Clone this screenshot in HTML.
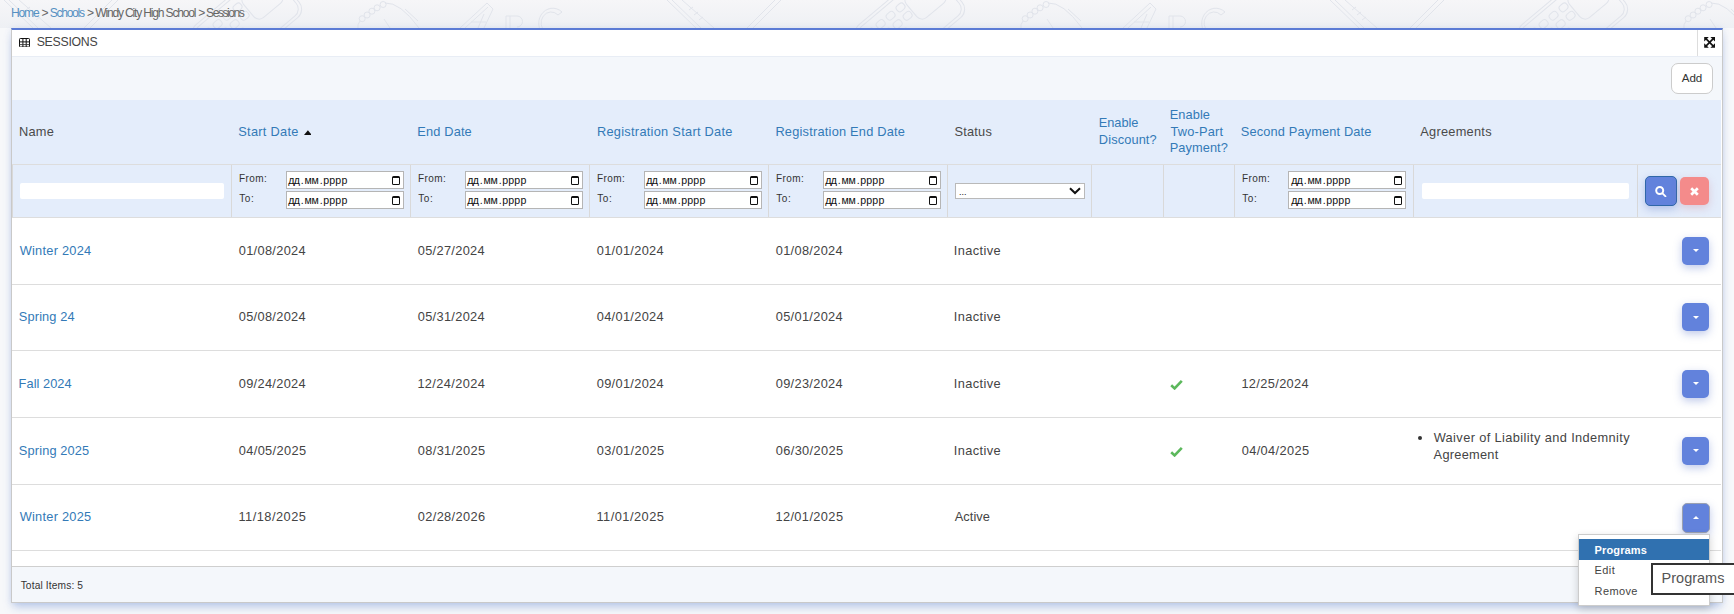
<!DOCTYPE html>
<html lang="en">
<head>
<meta charset="utf-8">
<title>Sessions</title>
<style>
*{box-sizing:border-box;margin:0;padding:0}
html,body{width:1734px;height:614px;overflow:hidden}
body{font-family:"Liberation Sans",sans-serif;font-size:13.2px;color:#444;background:#f7f8fa;position:relative}
.abs{position:absolute}
a{color:#337ab7;text-decoration:none}
#bgtop{left:0;top:0;width:1734px;height:28px;background:linear-gradient(#f6f6f8,#eef0f4)}
.cr{font-size:12.1px;line-height:16px;color:#666;white-space:nowrap}
.cr.a{color:#5690c2}
#panel{left:11px;top:28px;width:1712px;height:575px;background:#fff;border:1px solid #c9c9c9;border-top:2px solid #5b7bd5;box-shadow:0 6px 9px -2px rgba(105,140,210,.42),0 0 6px rgba(120,150,215,.16)}
#hdr{left:12px;top:30px;width:1710px;height:27px;background:#fff;border-bottom:1px solid #e8edf5}
.ttl{font-size:12.3px;line-height:16px;color:#444;white-space:nowrap}
#expsep{left:1697px;top:30px;width:1px;height:26px;background:#ddd}
#toolbar{left:12px;top:57px;width:1710px;height:43px;background:#f4f7fb}
#add{left:1671px;top:63px;width:42px;height:30.5px;border:1px solid #ccc;border-radius:7px;background:#fff;font-size:11.6px;line-height:28px;text-align:center;color:#333}
#thead{left:12px;top:100px;width:1709px;height:117px;background:#e4edfb}
.hline{left:12px;width:1709px;height:1px;background:#ddd}
.vline{top:165px;width:1px;height:52px;background:#d9d9d9}
.th{font-size:12.8px;line-height:16px;white-space:nowrap;color:#4a4a4a}
.th.l{color:#337ab7}
.td{font-size:12.8px;line-height:16px;white-space:nowrap;color:#444}
.td.l{color:#337ab7}
.lbl{font-size:10px;line-height:13px;color:#333;white-space:nowrap}
.dt{font-size:10.6px;line-height:13px;color:#111;white-space:nowrap}
.date{width:118px;height:18px;background:#fff;border:1px solid #b5b5b5;font-family:"Liberation Mono",monospace;font-size:10.5px;line-height:16px;color:#000;padding-left:2px;white-space:nowrap}
.date i{position:absolute;right:3px;top:3.5px;width:8px;height:9px;border:1px solid #111;border-top:2.5px solid #111;border-radius:1.5px;display:block}
.txt{height:16px;background:#fff;border-radius:2px}
.btn{border-radius:5px;background:#6282dc;box-shadow:0 3px 9px rgba(90,115,200,.38)}
#foot{left:12px;top:566px;width:1710px;height:36px;background:#f4f7fb;border-top:1px solid #cfcfcf}
.tot{font-size:10.2px;line-height:13px;color:#333;white-space:nowrap}
#menu{left:1577.6px;top:534px;width:132.4px;height:72px;background:#fff;border:1px solid #ccc;box-shadow:0 3px 8px rgba(0,0,0,.18)}
#menu .it{position:absolute;left:0;width:130px;height:20.5px;font-size:11px;letter-spacing:.38px;line-height:20.5px;padding-left:16px;color:#444;white-space:nowrap}
#tip{left:1651px;top:563px;width:90px;height:32px;background:#fff;border:2px solid #333;font-size:14.5px;line-height:27.4px;padding-left:8.6px;color:#555;white-space:nowrap}
</style>
</head>
<body>
<div class="abs" id="bgtop"></div>
<svg class="abs" style="left:0;top:0" width="1734" height="28" viewBox="0 0 1734 28"><g transform="translate(0,0)" fill="none" stroke="#e1e4eb" stroke-width="1">
<path d="M4 0L33 28M9 0L38 28M19 0L51 28M84 28L112 0M90 28L118 0M26 10l4 -3M31 15l4 -3M36 20l4 -3"/>
<g transform="translate(247,21) rotate(-40)"><rect x="-52" y="-30" width="104" height="60" rx="11"/><rect x="-49" y="-27" width="98" height="54" rx="9"/><rect x="8" y="-22" width="36" height="30" rx="7"/><path d="M14 -16H38"/>
<rect x="-42" y="-20" width="9" height="7" rx="3"/><rect x="-29" y="-20" width="9" height="7" rx="3"/><rect x="-16" y="-20" width="9" height="7" rx="3"/><rect x="-3" y="-20" width="9" height="7" rx="3"/>
<rect x="-42" y="-9" width="9" height="7" rx="3"/><rect x="-29" y="-9" width="9" height="7" rx="3"/><rect x="-16" y="-9" width="9" height="7" rx="3"/><rect x="-3" y="-9" width="9" height="7" rx="3"/>
<rect x="-42" y="2" width="9" height="7" rx="3"/><rect x="-29" y="2" width="9" height="7" rx="3"/><rect x="-16" y="2" width="9" height="7" rx="3"/></g>
<circle cx="362.2" cy="18.7" r="3"/><circle cx="367.1" cy="15" r="3"/><circle cx="371.9" cy="11.2" r="3"/><circle cx="377.1" cy="7.8" r="3"/><circle cx="383.1" cy="4.5" r="3"/>
<path d="M360 21Q357 25 358 28M385 3Q400 2 419 28M405 9L418 21M384 19L390 28"/>
<path d="M460 28L487 3L493 9L484 28M465 28L488 7M471 22H486M478 28L484 14"/>
<path d="M506 28V16H517a5.5 5.5 0 0 1 0 11M510 28V16"/>
<path d="M562 12A14 15 0 1 0 566 28M558 15A10 11 0 1 0 560 28M562 12l-4 3"/>
</g><g transform="translate(663,0)" fill="none" stroke="#e1e4eb" stroke-width="1">
<path d="M4 0L33 28M9 0L38 28M19 0L51 28M84 28L112 0M90 28L118 0M26 10l4 -3M31 15l4 -3M36 20l4 -3"/>
<g transform="translate(247,21) rotate(-40)"><rect x="-52" y="-30" width="104" height="60" rx="11"/><rect x="-49" y="-27" width="98" height="54" rx="9"/><rect x="8" y="-22" width="36" height="30" rx="7"/><path d="M14 -16H38"/>
<rect x="-42" y="-20" width="9" height="7" rx="3"/><rect x="-29" y="-20" width="9" height="7" rx="3"/><rect x="-16" y="-20" width="9" height="7" rx="3"/><rect x="-3" y="-20" width="9" height="7" rx="3"/>
<rect x="-42" y="-9" width="9" height="7" rx="3"/><rect x="-29" y="-9" width="9" height="7" rx="3"/><rect x="-16" y="-9" width="9" height="7" rx="3"/><rect x="-3" y="-9" width="9" height="7" rx="3"/>
<rect x="-42" y="2" width="9" height="7" rx="3"/><rect x="-29" y="2" width="9" height="7" rx="3"/><rect x="-16" y="2" width="9" height="7" rx="3"/></g>
<circle cx="362.2" cy="18.7" r="3"/><circle cx="367.1" cy="15" r="3"/><circle cx="371.9" cy="11.2" r="3"/><circle cx="377.1" cy="7.8" r="3"/><circle cx="383.1" cy="4.5" r="3"/>
<path d="M360 21Q357 25 358 28M385 3Q400 2 419 28M405 9L418 21M384 19L390 28"/>
<path d="M460 28L487 3L493 9L484 28M465 28L488 7M471 22H486M478 28L484 14"/>
<path d="M506 28V16H517a5.5 5.5 0 0 1 0 11M510 28V16"/>
<path d="M562 12A14 15 0 1 0 566 28M558 15A10 11 0 1 0 560 28M562 12l-4 3"/>
</g><g transform="translate(1326,0)" fill="none" stroke="#e1e4eb" stroke-width="1">
<path d="M4 0L33 28M9 0L38 28M19 0L51 28M84 28L112 0M90 28L118 0M26 10l4 -3M31 15l4 -3M36 20l4 -3"/>
<g transform="translate(247,21) rotate(-40)"><rect x="-52" y="-30" width="104" height="60" rx="11"/><rect x="-49" y="-27" width="98" height="54" rx="9"/><rect x="8" y="-22" width="36" height="30" rx="7"/><path d="M14 -16H38"/>
<rect x="-42" y="-20" width="9" height="7" rx="3"/><rect x="-29" y="-20" width="9" height="7" rx="3"/><rect x="-16" y="-20" width="9" height="7" rx="3"/><rect x="-3" y="-20" width="9" height="7" rx="3"/>
<rect x="-42" y="-9" width="9" height="7" rx="3"/><rect x="-29" y="-9" width="9" height="7" rx="3"/><rect x="-16" y="-9" width="9" height="7" rx="3"/><rect x="-3" y="-9" width="9" height="7" rx="3"/>
<rect x="-42" y="2" width="9" height="7" rx="3"/><rect x="-29" y="2" width="9" height="7" rx="3"/><rect x="-16" y="2" width="9" height="7" rx="3"/></g>
<circle cx="362.2" cy="18.7" r="3"/><circle cx="367.1" cy="15" r="3"/><circle cx="371.9" cy="11.2" r="3"/><circle cx="377.1" cy="7.8" r="3"/><circle cx="383.1" cy="4.5" r="3"/>
<path d="M360 21Q357 25 358 28M385 3Q400 2 419 28M405 9L418 21M384 19L390 28"/>
<path d="M460 28L487 3L493 9L484 28M465 28L488 7M471 22H486M478 28L484 14"/>
<path d="M506 28V16H517a5.5 5.5 0 0 1 0 11M510 28V16"/>
<path d="M562 12A14 15 0 1 0 566 28M558 15A10 11 0 1 0 560 28M562 12l-4 3"/>
</g></svg>

<div class="abs" id="panel"></div>
<div class="abs" id="hdr"></div>
<svg class="abs" style="left:19px;top:37.5px" width="11" height="9.5" viewBox="0 0 11 9.5"><rect x="0.5" y="0.5" width="10" height="8.5" rx="0.8" fill="#fff" stroke="#111" stroke-width="1"/><path d="M0.5 3.9H10.5M3.9 0.5V9M7.2 0.5V9" stroke="#111" stroke-width="1" fill="none"/><path d="M0.5 6.6H10.5" stroke="#333" stroke-width="0.9" fill="none"/></svg>
<div class="abs" id="expsep"></div>
<svg class="abs" style="left:1704px;top:37.2px" width="11.2" height="10.8" viewBox="0 0 11 11"><path d="M2 2L9 9M9 2L2 9" stroke="#111" stroke-width="1.7" fill="none"/><path d="M0 0H4.7L0 4.7ZM11 0V4.7L6.3 0ZM0 11V6.3L4.7 11ZM11 11H6.3L11 6.3Z" fill="#111"/></svg>

<div class="abs" id="toolbar"></div>
<div class="abs" id="add">Add</div>

<div class="abs" id="thead"></div>
<svg class="abs" style="left:303.6px;top:130px" width="7.8" height="5.2" viewBox="0 0 8 5"><path d="M0 5L4 0L8 5Z" fill="#111"/></svg>

<!-- filter row -->
<div class="abs hline" style="top:164px"></div>
<div class="abs vline" style="left:12px"></div>
<div class="abs vline" style="left:231px"></div>
<div class="abs vline" style="left:410px"></div>
<div class="abs vline" style="left:589px"></div>
<div class="abs vline" style="left:768px"></div>
<div class="abs vline" style="left:947px"></div>
<div class="abs vline" style="left:1091px"></div>
<div class="abs vline" style="left:1163px"></div>
<div class="abs vline" style="left:1234px"></div>
<div class="abs vline" style="left:1413px"></div>
<div class="abs vline" style="left:1637px"></div>

<div class="abs txt" style="left:20px;top:183px;width:204px"></div>
<div class="abs txt" style="left:1422px;top:183px;width:207px"></div>

<div class="abs date" style="left:286px;top:171px"><i></i></div>
<div class="abs date" style="left:286px;top:191px"><i></i></div>
<div class="abs date" style="left:465px;top:171px"><i></i></div>
<div class="abs date" style="left:465px;top:191px"><i></i></div>
<div class="abs date" style="left:644px;top:171px"><i></i></div>
<div class="abs date" style="left:644px;top:191px"><i></i></div>
<div class="abs date" style="left:823px;top:171px"><i></i></div>
<div class="abs date" style="left:823px;top:191px"><i></i></div>
<div class="abs date" style="left:1288px;top:171px"><i></i></div>
<div class="abs date" style="left:1288px;top:191px"><i></i></div>

<div class="abs" style="left:955px;top:183px;width:130px;height:16px;background:#fff;border:1px solid #b9b9b9"></div>
<div class="abs" style="left:959px;top:186px;font-size:9px;line-height:12px;color:#111">...</div>
<svg class="abs" style="left:1069px;top:187px" width="12" height="8" viewBox="0 0 12 8"><path d="M1 1.2L6 6L11 1.2" stroke="#111" stroke-width="2" fill="none"/></svg>

<div class="abs btn" style="left:1645px;top:176px;width:32px;height:30px;border:1px solid #2f67a8"></div>
<svg class="abs" style="left:1655px;top:185px" width="12" height="12" viewBox="0 0 12 12"><circle cx="4.7" cy="5.5" r="3.5" stroke="#fff" stroke-width="2" fill="none"/><path d="M7.5 8.3L10.5 11.3" stroke="#fff" stroke-width="1.8" stroke-linecap="round"/></svg>
<div class="abs btn" style="left:1680px;top:177px;width:29px;height:28px;background:#f48b8b;box-shadow:0 3px 8px rgba(200,120,140,.3)"></div>
<svg class="abs" style="left:1690px;top:187px" width="9" height="9" viewBox="0 0 9 9"><path d="M1.2 1.2L7.8 7.8M7.8 1.2L1.2 7.8" stroke="#fff" stroke-width="2.7"/></svg>

<div class="abs hline" style="top:217px"></div>
<div class="abs hline" style="top:284px"></div>
<div class="abs hline" style="top:350px"></div>
<div class="abs hline" style="top:417px"></div>
<div class="abs hline" style="top:484px"></div>
<div class="abs hline" style="top:550px"></div>
<div class="abs btn" style="left:1682px;top:236.5px;width:27px;height:28px"></div>
<svg class="abs" style="left:1692.5px;top:249.0px" width="6" height="3" viewBox="0 0 6 3"><path d="M0 0H6L3 3Z" fill="#fff"/></svg>
<div class="abs btn" style="left:1682px;top:303.0px;width:27px;height:28px"></div>
<svg class="abs" style="left:1692.5px;top:315.5px" width="6" height="3" viewBox="0 0 6 3"><path d="M0 0H6L3 3Z" fill="#fff"/></svg>
<svg class="abs" style="left:1170px;top:378.5px" width="13" height="11" viewBox="0 0 13 11"><path d="M1.2 6.2L4.6 9.4L11.8 1.8" stroke="#5cb85c" stroke-width="2.6" fill="none"/></svg>
<div class="abs btn" style="left:1682px;top:369.5px;width:27px;height:28px"></div>
<svg class="abs" style="left:1692.5px;top:382.0px" width="6" height="3" viewBox="0 0 6 3"><path d="M0 0H6L3 3Z" fill="#fff"/></svg>
<svg class="abs" style="left:1170px;top:445.5px" width="13" height="11" viewBox="0 0 13 11"><path d="M1.2 6.2L4.6 9.4L11.8 1.8" stroke="#5cb85c" stroke-width="2.6" fill="none"/></svg>
<div class="abs" style="left:1417.7px;top:435.8px;width:4.6px;height:4.6px;border-radius:50%;background:#333"></div>
<div class="abs btn" style="left:1682px;top:436.5px;width:27px;height:28px"></div>
<svg class="abs" style="left:1692.5px;top:449.0px" width="6" height="3" viewBox="0 0 6 3"><path d="M0 0H6L3 3Z" fill="#fff"/></svg>
<div class="abs btn" style="left:1681.5px;top:502.5px;width:28px;height:30px;border:1px solid #9aa0b0"></div>
<svg class="abs" style="left:1692.5px;top:515.5px" width="6" height="3" viewBox="0 0 6 3"><path d="M0 3H6L3 0Z" fill="#fff"/></svg>

<div class="abs" id="foot"></div>
<div class="abs cr a" style="left:11.09px;top:4.61px;letter-spacing:-1.242px;">Home</div>
<div class="abs cr" style="left:41.49px;top:4.61px;">&gt;</div>
<div class="abs cr a" style="left:49.69px;top:4.61px;letter-spacing:-1.296px;">Schools</div>
<div class="abs cr" style="left:86.98px;top:4.61px;">&gt;</div>
<div class="abs cr" style="left:95.23px;top:4.61px;letter-spacing:-1.192px;">Windy City High School</div>
<div class="abs cr" style="left:198.25px;top:4.61px;">&gt;</div>
<div class="abs cr" style="left:206.12px;top:4.61px;letter-spacing:-1.47px;">Sessions</div>
<div class="abs ttl" style="left:36.7px;top:33.54px;letter-spacing:-0.278px;">SESSIONS</div>
<div class="abs th" style="left:19.03px;top:123.56px;letter-spacing:0.221px;">Name</div>
<div class="abs th l" style="left:238.26px;top:123.56px;letter-spacing:0.284px;">Start Date</div>
<div class="abs th l" style="left:417.37px;top:123.56px;letter-spacing:0.145px;">End Date</div>
<div class="abs th l" style="left:596.92px;top:123.56px;letter-spacing:0.277px;">Registration Start Date</div>
<div class="abs th l" style="left:775.41px;top:123.56px;letter-spacing:0.217px;">Registration End Date</div>
<div class="abs th" style="left:954.47px;top:123.56px;letter-spacing:0.222px;">Status</div>
<div class="abs th l" style="left:1098.86px;top:114.56px;letter-spacing:-0.072px;">Enable</div>
<div class="abs th l" style="left:1098.86px;top:131.76px;letter-spacing:0.111px;">Discount?</div>
<div class="abs th l" style="left:1169.63px;top:106.56px;letter-spacing:0.098px;">Enable</div>
<div class="abs th l" style="left:1170.44px;top:123.76px;letter-spacing:0.19px;">Two-Part</div>
<div class="abs th l" style="left:1169.63px;top:139.56px;letter-spacing:0.085px;">Payment?</div>
<div class="abs th l" style="left:1240.79px;top:123.56px;letter-spacing:0.142px;">Second Payment Date</div>
<div class="abs th" style="left:1420.29px;top:123.56px;letter-spacing:0.253px;">Agreements</div>
<div class="abs td l" style="left:19.66px;top:242.56px;letter-spacing:0.259px;">Winter 2024</div>
<div class="abs td" style="left:238.75px;top:242.56px;letter-spacing:0.318px;">01/08/2024</div>
<div class="abs td" style="left:417.75px;top:242.56px;letter-spacing:0.318px;">05/27/2024</div>
<div class="abs td" style="left:596.75px;top:242.56px;letter-spacing:0.318px;">01/01/2024</div>
<div class="abs td" style="left:775.75px;top:242.56px;letter-spacing:0.318px;">01/08/2024</div>
<div class="abs td" style="left:953.87px;top:242.56px;letter-spacing:0.378px;">Inactive</div>
<div class="abs td l" style="left:18.87px;top:308.56px;letter-spacing:0.124px;">Spring 24</div>
<div class="abs td" style="left:238.75px;top:308.56px;letter-spacing:0.318px;">05/08/2024</div>
<div class="abs td" style="left:417.75px;top:308.56px;letter-spacing:0.318px;">05/31/2024</div>
<div class="abs td" style="left:596.75px;top:308.56px;letter-spacing:0.318px;">04/01/2024</div>
<div class="abs td" style="left:775.75px;top:308.56px;letter-spacing:0.318px;">05/01/2024</div>
<div class="abs td" style="left:953.87px;top:308.56px;letter-spacing:0.378px;">Inactive</div>
<div class="abs td l" style="left:18.6px;top:375.56px;letter-spacing:0.051px;">Fall 2024</div>
<div class="abs td" style="left:238.75px;top:375.56px;letter-spacing:0.318px;">09/24/2024</div>
<div class="abs td" style="left:417.38px;top:375.56px;letter-spacing:0.371px;">12/24/2024</div>
<div class="abs td" style="left:596.75px;top:375.56px;letter-spacing:0.318px;">09/01/2024</div>
<div class="abs td" style="left:775.75px;top:375.56px;letter-spacing:0.318px;">09/23/2024</div>
<div class="abs td" style="left:953.87px;top:375.56px;letter-spacing:0.378px;">Inactive</div>
<div class="abs td" style="left:1241.38px;top:375.56px;letter-spacing:0.364px;">12/25/2024</div>
<div class="abs td l" style="left:18.87px;top:442.56px;letter-spacing:0.131px;">Spring 2025</div>
<div class="abs td" style="left:238.75px;top:442.56px;letter-spacing:0.363px;">04/05/2025</div>
<div class="abs td" style="left:417.75px;top:442.56px;letter-spacing:0.363px;">08/31/2025</div>
<div class="abs td" style="left:596.75px;top:442.56px;letter-spacing:0.363px;">03/01/2025</div>
<div class="abs td" style="left:775.75px;top:442.56px;letter-spacing:0.363px;">06/30/2025</div>
<div class="abs td" style="left:953.87px;top:442.56px;letter-spacing:0.378px;">Inactive</div>
<div class="abs td" style="left:1241.75px;top:442.56px;letter-spacing:0.357px;">04/04/2025</div>
<div class="abs td l" style="left:19.66px;top:508.56px;letter-spacing:0.259px;">Winter 2025</div>
<div class="abs td" style="left:238.38px;top:508.56px;letter-spacing:0.493px;">11/18/2025</div>
<div class="abs td" style="left:417.75px;top:508.56px;letter-spacing:0.366px;">02/28/2026</div>
<div class="abs td" style="left:596.38px;top:508.56px;letter-spacing:0.493px;">11/01/2025</div>
<div class="abs td" style="left:775.38px;top:508.56px;letter-spacing:0.398px;">12/01/2025</div>
<div class="abs td" style="left:954.77px;top:508.56px;letter-spacing:0.056px;">Active</div>
<div class="abs td" style="left:1433.64px;top:429.56px;letter-spacing:0.385px;">Waiver of Liability and Indemnity</div>
<div class="abs td" style="left:1433.6px;top:446.76px;letter-spacing:0.259px;">Agreement</div>
<div class="abs tot" style="left:20.64px;top:578.97px;letter-spacing:0.139px;">Total Items: 5</div>
<div class="abs lbl" style="left:238.88px;top:172.03px;letter-spacing:0.45px;">From:</div>
<div class="abs dt" style="left:288.21px;top:173.83px;letter-spacing:-0.749px;">дд</div>
<div class="abs dt" style="left:300.8px;top:173.83px;">.</div>
<div class="abs dt" style="left:304.55px;top:173.83px;letter-spacing:-0.231px;">мм</div>
<div class="abs dt" style="left:319.8px;top:173.83px;">.</div>
<div class="abs dt" style="left:323.18px;top:173.83px;letter-spacing:0.193px;">рррр</div>
<div class="abs lbl" style="left:239.19px;top:191.84px;letter-spacing:0.595px;">To:</div>
<div class="abs dt" style="left:288.21px;top:193.73px;letter-spacing:-0.749px;">дд</div>
<div class="abs dt" style="left:300.8px;top:193.73px;">.</div>
<div class="abs dt" style="left:304.55px;top:193.73px;letter-spacing:-0.231px;">мм</div>
<div class="abs dt" style="left:319.8px;top:193.73px;">.</div>
<div class="abs dt" style="left:323.18px;top:193.73px;letter-spacing:0.193px;">рррр</div>
<div class="abs lbl" style="left:417.88px;top:172.03px;letter-spacing:0.45px;">From:</div>
<div class="abs dt" style="left:467.21px;top:173.83px;letter-spacing:-0.749px;">дд</div>
<div class="abs dt" style="left:479.8px;top:173.83px;">.</div>
<div class="abs dt" style="left:483.55px;top:173.83px;letter-spacing:-0.231px;">мм</div>
<div class="abs dt" style="left:498.8px;top:173.83px;">.</div>
<div class="abs dt" style="left:502.18px;top:173.83px;letter-spacing:0.193px;">рррр</div>
<div class="abs lbl" style="left:418.19px;top:191.84px;letter-spacing:0.595px;">To:</div>
<div class="abs dt" style="left:467.21px;top:193.73px;letter-spacing:-0.749px;">дд</div>
<div class="abs dt" style="left:479.8px;top:193.73px;">.</div>
<div class="abs dt" style="left:483.55px;top:193.73px;letter-spacing:-0.231px;">мм</div>
<div class="abs dt" style="left:498.8px;top:193.73px;">.</div>
<div class="abs dt" style="left:502.18px;top:193.73px;letter-spacing:0.193px;">рррр</div>
<div class="abs lbl" style="left:596.88px;top:172.03px;letter-spacing:0.45px;">From:</div>
<div class="abs dt" style="left:646.21px;top:173.83px;letter-spacing:-0.749px;">дд</div>
<div class="abs dt" style="left:658.8px;top:173.83px;">.</div>
<div class="abs dt" style="left:662.55px;top:173.83px;letter-spacing:-0.231px;">мм</div>
<div class="abs dt" style="left:677.8px;top:173.83px;">.</div>
<div class="abs dt" style="left:681.18px;top:173.83px;letter-spacing:0.193px;">рррр</div>
<div class="abs lbl" style="left:597.19px;top:191.84px;letter-spacing:0.595px;">To:</div>
<div class="abs dt" style="left:646.21px;top:193.73px;letter-spacing:-0.749px;">дд</div>
<div class="abs dt" style="left:658.8px;top:193.73px;">.</div>
<div class="abs dt" style="left:662.55px;top:193.73px;letter-spacing:-0.231px;">мм</div>
<div class="abs dt" style="left:677.8px;top:193.73px;">.</div>
<div class="abs dt" style="left:681.18px;top:193.73px;letter-spacing:0.193px;">рррр</div>
<div class="abs lbl" style="left:775.88px;top:172.03px;letter-spacing:0.45px;">From:</div>
<div class="abs dt" style="left:825.21px;top:173.83px;letter-spacing:-0.749px;">дд</div>
<div class="abs dt" style="left:837.8px;top:173.83px;">.</div>
<div class="abs dt" style="left:841.55px;top:173.83px;letter-spacing:-0.231px;">мм</div>
<div class="abs dt" style="left:856.8px;top:173.83px;">.</div>
<div class="abs dt" style="left:860.18px;top:173.83px;letter-spacing:0.193px;">рррр</div>
<div class="abs lbl" style="left:776.19px;top:191.84px;letter-spacing:0.595px;">To:</div>
<div class="abs dt" style="left:825.21px;top:193.73px;letter-spacing:-0.749px;">дд</div>
<div class="abs dt" style="left:837.8px;top:193.73px;">.</div>
<div class="abs dt" style="left:841.55px;top:193.73px;letter-spacing:-0.231px;">мм</div>
<div class="abs dt" style="left:856.8px;top:193.73px;">.</div>
<div class="abs dt" style="left:860.18px;top:193.73px;letter-spacing:0.193px;">рррр</div>
<div class="abs lbl" style="left:1241.88px;top:172.03px;letter-spacing:0.45px;">From:</div>
<div class="abs dt" style="left:1291.21px;top:173.83px;letter-spacing:-0.749px;">дд</div>
<div class="abs dt" style="left:1303.8px;top:173.83px;">.</div>
<div class="abs dt" style="left:1307.55px;top:173.83px;letter-spacing:-0.231px;">мм</div>
<div class="abs dt" style="left:1322.8px;top:173.83px;">.</div>
<div class="abs dt" style="left:1326.18px;top:173.83px;letter-spacing:0.193px;">рррр</div>
<div class="abs lbl" style="left:1242.19px;top:191.84px;letter-spacing:0.595px;">To:</div>
<div class="abs dt" style="left:1291.21px;top:193.73px;letter-spacing:-0.749px;">дд</div>
<div class="abs dt" style="left:1303.8px;top:193.73px;">.</div>
<div class="abs dt" style="left:1307.55px;top:193.73px;letter-spacing:-0.231px;">мм</div>
<div class="abs dt" style="left:1322.8px;top:193.73px;">.</div>
<div class="abs dt" style="left:1326.18px;top:193.73px;letter-spacing:0.193px;">рррр</div>

<div class="abs" id="menu">
  <div class="it" style="top:4px;height:21px;line-height:22px;background:#3071b0;color:#fff;font-weight:bold;font-size:11px;letter-spacing:.12px">Programs</div>
  <div class="it" style="top:25px">Edit</div>
  <div class="it" style="top:45.5px">Remove</div>
</div>
<div class="abs" id="tip">Programs</div>
</body>
</html>
